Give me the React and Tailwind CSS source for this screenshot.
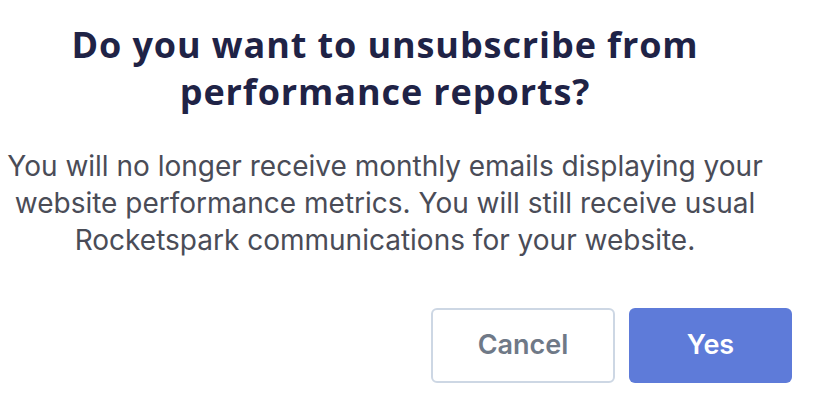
import React from 'react';

const App = () => {
    return (
        <div className="w-[828px] h-[406px] bg-white overflow-hidden" style={{ fontFamily: 'Inter, "Open Sans", sans-serif' }}>
            <div className="w-[770px] text-center pt-[21px]">
                <h2
                    className="text-[36px] leading-[47px] font-bold text-[#1f2346] tracking-[0.9px]"
                    style={{ fontFamily: '"Open Sans", Inter, sans-serif' }}
                >
                    Do you want to unsubscribe from
                    <br />
                    performance reports?
                </h2>
                <p className="mt-[33px] text-[28px] leading-[37px] text-[#4a4c57]">
                    You will no longer receive monthly emails displaying your
                    <br />
                    website performance metrics. You will still receive usual
                    <br />
                    Rocketspark communications for your website.
                </p>
            </div>
            <div className="flex justify-end gap-[14px] pr-[36px] mt-[49px]">
                <button className="w-[184px] h-[75px] rounded-[6px] border-2 border-[#cdd7e4] bg-white text-[27px] font-semibold text-[#6f7987]">
                    Cancel
                </button>
                <button className="w-[163px] h-[75px] rounded-[6px] bg-[#5e7bd9] text-[27px] font-semibold text-white">
                    Yes
                </button>
            </div>
        </div>
    );
};

export default App;
